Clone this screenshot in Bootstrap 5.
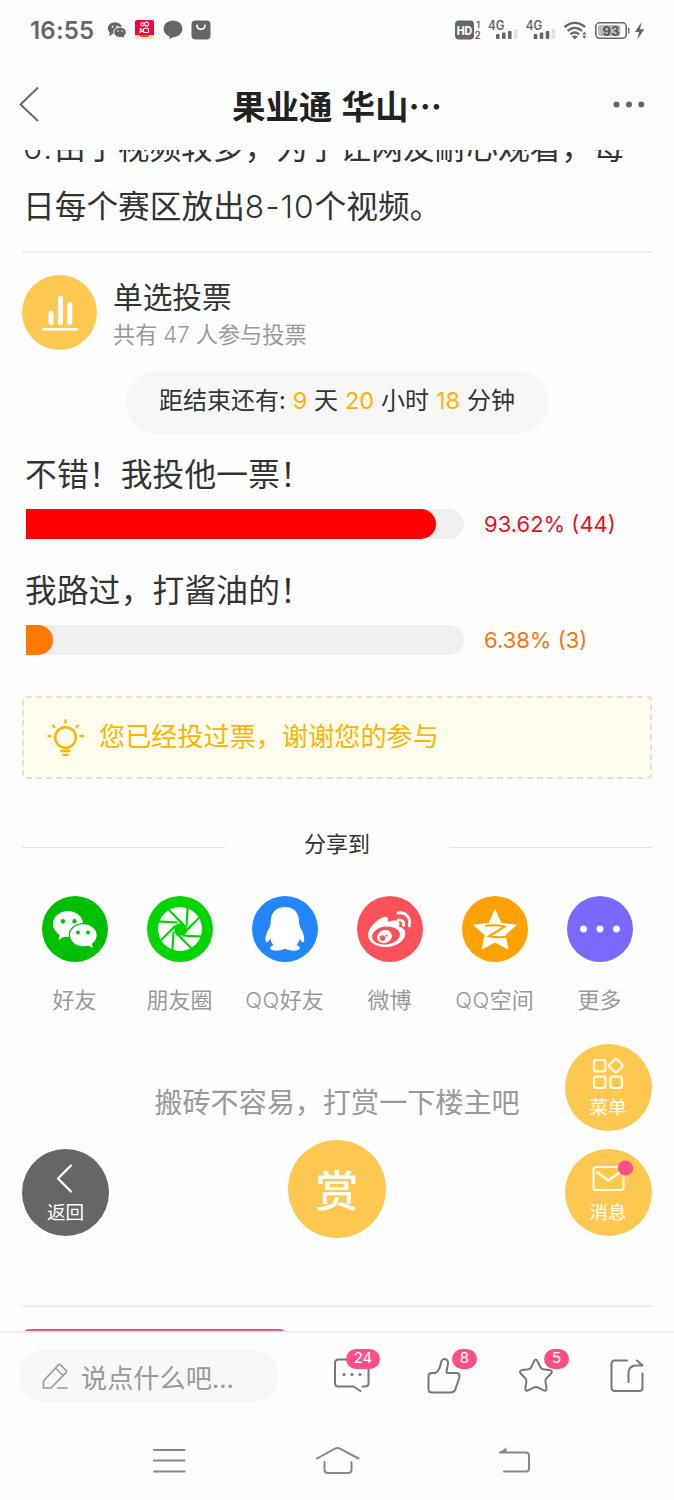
<!DOCTYPE html>
<html lang="zh-CN">
<head>
<meta charset="utf-8">
<meta name="viewport" content="width=device-width, initial-scale=1">
<title>果业通</title>
<link href="https://cdn.jsdelivr.net/npm/bootstrap@5.3.0/dist/css/bootstrap.min.css" rel="stylesheet">
<style>
body{font-family:"Noto Sans CJK SC",sans-serif;background:#fefefe;color:#333;height:1500px;overflow:hidden}
svg{display:block;flex:none;overflow:visible}
.status{height:60px;padding:0 27px 0 30px;color:#666}
.clock{font:600 24px/61px Inter,sans-serif;letter-spacing:.2px;width:64px;margin-right:13px;white-space:nowrap}
.topbar{height:90px}
.topbar h1{font-size:33.5px;font-weight:700;line-height:90px;color:#222;word-spacing:1.500px}
.topbar .side{width:60px}
main{height:1181px;overflow:hidden;padding:0 22px}
.rule{height:2px;background:#efefef}
.body-text{font-size:31.7px;line-height:59px;margin:-34px 0 17px;padding-left:1px;white-space:nowrap}
.lat{font-family:Inter,sans-serif;font-weight:300;line-height:0!important}
.poll-head{height:75px;margin-top:22px;gap:16px}
.poll-head .t1{font-size:29.7px;line-height:42px}
.poll-head .t2{font-size:22.2px;line-height:32px;color:#999;word-spacing:1px}
.disc{border-radius:50%;display:flex;align-items:center;justify-content:center;flex:none}
.yellow{background:#ffc951;color:#fff}
.remain{width:423px;height:63px;margin:21px auto 0;background:#f7f7f7;font-size:24px;line-height:56px;text-align:center;white-space:nowrap;word-spacing:1.500px}
.remain b{font-family:Inter,sans-serif;line-height:0;font-weight:400;font-size:23.5px;color:#fcb400}
.choice{font-size:31.7px;letter-spacing:.2px;line-height:45px;padding:0 0 1px 3px;white-space:nowrap}
.track{width:438.5px;height:30px;border-radius:0 15px 15px 0;background:#efefef;margin-left:3.5px}
.track div{height:30px;border-radius:0 15px 15px 0}
.pct{font-family:Inter,sans-serif;font-size:22px;line-height:30px;margin-left:20px}
.notice{height:83px;margin-top:41px;border:2px dashed #e6e3cd;border-radius:4px;background:#fffeee;color:#fcb400;font-size:26.15px;line-height:75px;padding-left:23px}
.share-title{margin-top:51px;height:30px;font-size:22px;line-height:30px}
.share-title span{margin-top:-6px}
.share-title i{width:203px;height:1px;background:#e4e4e4;margin-top:5px}
.share{margin-top:36px}
.share .disc{width:66px;height:66px}
.share .name{font-size:22px;line-height:32px;margin-top:20px;color:#999;white-space:nowrap}
.tip{font-size:28.1px;line-height:42px;margin-top:66px;color:#999;text-align:center}
.reward{width:98px;height:98px;margin:18px auto 0;font-size:43px;line-height:94px;font-weight:500;padding-bottom:3px}
.floater{position:absolute;width:87px;height:87px;flex-direction:column;justify-content:flex-start;font-size:18.6px;line-height:24px;color:#fff}
footer{height:169px;border-top:2px solid #eee}
.say{width:260px;height:52px;background:#f7f7f7;color:#999;font-size:26.2px;line-height:55px;margin-left:19px;padding-left:23px}
.tool{position:relative;width:36px;height:36px}
.count{position:absolute;top:-10px;height:20px;border-radius:10px;background:#ff4f86;color:#fff;font:400 15px/18px Inter,sans-serif;text-align:center}
.stroke{fill:none;stroke:#777;stroke-width:2;stroke-linecap:round;stroke-linejoin:round}
</style>
</head>
<body class="position-relative">
<div class="status d-flex align-items-center">
  <span class="clock">16:55</span>
  <svg width="104" height="22" viewBox="107 19 104 22">
    <g fill="#666"><ellipse cx="115" cy="28.3" rx="7.2" ry="6"/><path d="M110 32l-1 4 4-2z"/><ellipse cx="120" cy="32.3" rx="6.3" ry="5.2" stroke="#fefefe"/><path d="M121 36l3 2-.3-3z"/></g>
    <g fill="#fefefe"><circle cx="112.6" cy="26.7" r=".9"/><circle cx="117.3" cy="26.7" r=".9"/><circle cx="118" cy="31" r=".8"/><circle cx="122" cy="31" r=".8"/></g>
    <rect x="135" y="20" width="19" height="19" rx="2" fill="#f9dcae"/><path d="M137 20h15q2 0 2 2v13h-19V22q0-2 2-2z" fill="#f3043c"/>
    <g fill="none" stroke="#fff" stroke-width="1.100"><circle cx="142.400" cy="24.400" r="1.600"/><circle cx="146.600" cy="24.100" r="2"/><rect x="143.500" y="28.300" width="5" height="4.200" rx="1"/><path d="M140.300 28.500v3.800l2-1.200v-1.400z"/></g><path d="M139.500 35h10l-1.500 2h-7z" fill="#cf6840"/>
    <path d="M173 20.500c5.300 0 9.300 3.600 9.300 8.200s-3.500 7.800-8.300 8.200l-4.800 2.200.4-2.600c-3.500-1.200-5.900-4.200-5.900-7.800 0-4.600 4-8.200 9.300-8.200z" fill="#666"/>
    <rect x="191.500" y="20.500" width="19" height="19" rx="4" fill="#666"/><path d="M197 25.500c.6 5 7.400 5 8 0" fill="none" stroke="#fff" stroke-width="1.800" stroke-linecap="round"/>
  </svg>
  <svg class="ms-auto" width="192" height="24" viewBox="455 18 192 24" font-family="Inter,sans-serif" font-weight="600" fill="#666">
    <rect x="455" y="20.500" width="19" height="19" rx="4"/><text x="456.700" y="34.500" font-size="11.500" font-weight="800" fill="#fff" textLength="15.500" lengthAdjust="spacingAndGlyphs">HD</text>
    <text x="476" y="28" font-size="9.500">1</text><text x="474.500" y="39.300" font-size="10">2</text>
    <g id="sig"><text x="488" y="30" font-size="12.500" textLength="16.500" lengthAdjust="spacingAndGlyphs">4G</text><rect x="496" y="34" width="3.600" height="5" rx="1"/><rect x="502" y="32.500" width="3.600" height="6.500" rx="1"/><rect x="508" y="31" width="3.600" height="8" rx="1"/><rect x="514" y="29" width="3.600" height="10" rx="1" fill="#e2e2e2"/></g>
    <use href="#sig" x="37.700"/>
    <g fill="none" stroke="#666" stroke-width="2.300"><path d="M564.500 27q10.300-8.200 20.600 0"/><path d="M567.500 30.800q7.300-5.800 14.600 0"/><path d="M570.500 34.300q4.300-3.500 8.600 0"/></g><path d="M571.800 36.500q3-2 6 0l-3 3z"/><path d="M582.300 34.500l2-3 2 3zM582.300 35.700h4l-2 3z"/>
    <rect x="595.800" y="22.800" width="30.500" height="15.500" rx="4" fill="none" stroke="#666" stroke-width="1.600"/><rect x="598" y="25" width="22.500" height="11" rx="2" fill="#bbb"/><rect x="628" y="28" width="1.400" height="5.500"/><text x="602.500" y="35.500" font-size="12.500" font-weight="700" textLength="17" lengthAdjust="spacingAndGlyphs" fill="#555">93</text>
    <path d="M641.500 22l-6.500 10h4l-1.600 7.500 6.800-10.300h-4.200z"/>
  </svg>
</div>
<header class="topbar d-flex justify-content-between align-items-center">
  <div class="side"><svg width="60" height="40" viewBox="0 85 60 40"><path d="M38 87.500L20.500 104.500 38 121" fill="none" stroke="#666" stroke-width="1.900"/></svg></div>
  <h1 class="m-0">果业通 华山…</h1>
  <div class="side"><svg width="60" height="40" viewBox="614 85 60 40" fill="#666"><circle cx="616.500" cy="104.500" r="3"/><circle cx="629" cy="104.500" r="3"/><circle cx="641.300" cy="104.500" r="3"/></svg></div>
</header>
<main>
  <p class="body-text"><span class="lat" style="letter-spacing:2.200px">6.</span>由于视频较多，为了让网友耐心观看，每<br>日每个赛区放出<span class="lat" style="letter-spacing:1px">8-10</span>个视频。</p>
  <div class="rule"></div>
  <div class="poll-head d-flex">
    <div class="disc yellow" style="width:75px;height:75px"><svg width="36" height="36" viewBox="42 294 36 36" fill="#fff"><rect x="48.500" y="310" width="5" height="14" rx="2.300"/><rect x="58" y="295" width="5" height="29" rx="2.300"/><rect x="67.300" y="301" width="5" height="23" rx="2.300"/><rect x="42" y="327" width="36" height="2.500" rx="1"/></svg></div>
    <div><div class="t1">单选投票</div><div class="t2">共有 <span class="lat">47</span> 人参与投票</div></div>
  </div>
  <div class="remain rounded-pill">距结束还有: <b>9</b> 天 <b>20</b> 小时 <b>18</b> 分钟</div>
  <div class="choice" style="margin-top:16px">不错！我投他一票！</div>
  <div class="d-flex" style="margin-top:13px"><div class="track"><div style="width:93.62%;background:#ff0005"></div></div><span class="pct" style="color:#e3131c">93.62% (44)</span></div>
  <div class="choice" style="margin-top:27px">我路过，打酱油的！</div>
  <div class="d-flex" style="margin-top:13px"><div class="track"><div style="width:6.38%;background:#ff7800"></div></div><span class="pct" style="color:#f0770f">6.38% (3)</span></div>
  <div class="notice d-flex"><svg width="38" height="38" viewBox="47 718 38 38" style="margin:20px 14px 0 0" fill="none" stroke="#fcb400" stroke-width="2.400" stroke-linecap="round"><circle cx="65.500" cy="737.500" r="10.300"/><path d="M65.500 720.500v2M53 725.500l1.500 1.500M78 725.500l-1.500 1.500M48.500 736h2M80.500 736h2.500M61.500 751h8M63.500 755h4"/></svg>您已经投过票，谢谢您的参与</div>
  <div class="share-title d-flex justify-content-between align-items-center"><i></i><span>分享到</span><i></i></div>
  <div class="share row g-0 row-cols-6">
    <div class="col d-flex flex-column align-items-center"><div class="disc" style="background:#00be00"><svg width="66" height="66" viewBox="0 0 66 66"><g fill="#fff"><ellipse cx="26" cy="28" rx="15" ry="13"/><path d="M18 37l-1.500 7 7-4z"/><ellipse cx="41.300" cy="39.300" rx="14" ry="11.700" stroke="#00be00" stroke-width="1.300"/><path d="M45 49l6 3-1.500-5.500z"/></g><g fill="#00be00"><circle cx="21" cy="25.300" r="2.200"/><circle cx="32.500" cy="25.300" r="2.200"/><circle cx="36" cy="36.500" r="1.900"/><circle cx="46" cy="36.500" r="1.900"/></g></svg></div><span class="name">好友</span></div>
    <div class="col d-flex flex-column align-items-center"><div class="disc" style="background:#00d500"><svg width="66" height="66" viewBox="0 0 66 66"><circle cx="33" cy="33" r="22" fill="#fff"/><path d="M30.500 27.500h6l3 3v6l-3 3h-6l-3-3v-6z" fill="#00d500"/><g fill="#00d500"><g id="bl"><path d="M21 14.500l1.500-1.200L37 27.500l-1.500 2z"/><path d="M39.600 11h2.200l-1.300 20-2-1z"/></g><use href="#bl" transform="rotate(90 33 33)"/><use href="#bl" transform="rotate(180 33 33)"/><use href="#bl" transform="rotate(270 33 33)"/></g></svg></div><span class="name">朋友圈</span></div>
    <div class="col d-flex flex-column align-items-center"><div class="disc" style="background:#2186ff"><svg width="66" height="66" viewBox="0 0 66 66"><path d="M33 11C24 11 18.800 17 18.800 25c0 3-.5 5-2 8-2.500 4-4.300 10-2.800 13 1 1 3-1 4.500-3 .5 3 1.500 4.500 3 6-2.500 1-4 2.500-3 4 2 2.500 11 2 14.500-.5 3.500 2.500 12.500 3 14.500.5 1-1.500-.5-3-3-4 1.500-1.500 2.500-3 3-6 1.500 2 3.500 4 4.200 3 1.500-3-.2-9-2.700-13-1.500-3-2-5-2-8C47 17 42 11 33 11z" fill="#fff"/></svg></div><span class="name"><span class="lat" style="letter-spacing:.6px">QQ</span>好友</span></div>
    <div class="col d-flex flex-column align-items-center"><div class="disc" style="background:#fb5159"><svg width="66" height="66" viewBox="0 0 66 66"><path d="M27 21c3-1 5 1 3.500 5 5-2 10-2 11.500 0 1 1.500.5 3-.2 4.500 4 1 6.500 3 6.500 7C48.300 45 39 51 29 51c-9.500 0-18-4.500-18-12C11 32 20 23 27 21z" fill="#fff"/><ellipse cx="29" cy="39.500" rx="14" ry="9" transform="rotate(-7 29 39.500)" fill="#fb5159"/><ellipse cx="27.500" cy="40.500" rx="7.500" ry="6.500" fill="#fff" transform="rotate(-20 27.500 40.500)"/><circle cx="25.500" cy="42" r="2.700" fill="#fb5159"/><circle cx="29.500" cy="39.500" r="1.100" fill="#fb5159"/><path d="M41 17c8-1.500 13.500 5.500 11.200 13M41 24c4-.8 6.500 2 5.500 5.500" fill="none" stroke="#fff" stroke-width="2.800" stroke-linecap="round"/></svg></div><span class="name">微博</span></div>
    <div class="col d-flex flex-column align-items-center"><div class="disc" style="background:#ffa200"><svg width="66" height="66" viewBox="0 0 66 66"><path d="M33 13l6.500 14 15.500 1.700-11.500 10.300 3.200 14.800L33 46.500 19.500 53.800 22.500 39 11 28.700 26.500 27z" fill="#fff"/><path d="M23 29.800q12-1.500 19.500.7L27 40.300q9 1.500 20 .5" fill="none" stroke="#ffa200" stroke-width="2"/></svg></div><span class="name"><span class="lat" style="letter-spacing:.6px">QQ</span>空间</span></div>
    <div class="col d-flex flex-column align-items-center"><div class="disc" style="background:#7d68ff"><svg width="66" height="66" viewBox="0 0 66 66" fill="#fff"><circle cx="16.500" cy="33" r="3.400"/><circle cx="33" cy="33" r="3.400"/><circle cx="49.500" cy="33" r="3.400"/></svg></div><span class="name">更多</span></div>
  </div>
  <div class="tip">搬砖不容易，打赏一下楼主吧</div>
  <div class="disc yellow reward">赏</div>
  <div class="rule" style="margin-top:67px"></div>
  <div style="width:263px;height:12px;margin:22px 0 0 1px;background:#e2578a;border-radius:6px"></div>
</main>
<footer>
  <div class="d-flex" style="padding-top:17px">
    <div class="say rounded-pill d-flex"><svg width="26" height="28" viewBox="43 1362 26 28" style="margin:12px 13px 0 0" fill="none" stroke="#999" stroke-width="1.700" stroke-linejoin="round" stroke-linecap="round"><path d="M44.500 1388v-7l14.800-16q1.200-1.200 2.400 0l5.300 5.300q1.200 1.200 0 2.400L52 1388zM56.500 1368l7.500 7.500M58.500 1388h9.500"/></svg>说点什么吧...</div>
    <div class="d-flex justify-content-between" style="margin:9px 28px 0 55px;width:312px">
      <div class="tool"><svg class="stroke" width="36" height="36" viewBox="334 1358 36 36"><path d="M362.500 1385.500h2.500q3.500 0 3.500-3.500v-20q0-3.500-3.500-3.500h-26.500q-3.500 0-3.500 3.500v20q0 3.500 3.500 3.500h15l7 4.500"/><g fill="#777" stroke="none"><circle cx="344" cy="1373.500" r="1.600"/><circle cx="352" cy="1373.500" r="1.600"/><circle cx="360" cy="1373.500" r="1.600"/></g></svg><span class="count" style="left:12px;width:34px">24</span></div>
      <div class="tool"><svg class="stroke" width="36" height="36" viewBox="426 1358 36 36"><path d="M431 1372h4q4-1.500 5.500-8l1-4q1-2.500 3.500-2 3.500 1 3 5l-1.500 7.500q0 1.500 1.500 1.500h8q4 0 3.500 4l-4 12q-1 3.500-5 3.500h-18.500q-3.500 0-3.500-3.500v-13q0-2.500 2.500-3z"/></svg><span class="count" style="left:26px;width:25px">8</span></div>
      <div class="tool"><svg class="stroke" width="36" height="36" viewBox="518 1358 36 36"><path d="M533.500 1361q2-4.500 4 0l2.500 5q1 2 3 2.500l6 .8q4.500.7 1.500 4l-4 4q-1.500 1.500-1.300 3.500l1 6q.6 4.500-3.200 2.700l-5-2.500q-2.300-1.200-4.600 0l-5 2.500q-3.800 1.800-3.200-2.700l1-6q.2-2-1.300-3.500l-4-4q-3-3.300 1.500-4l6-.8q2-.5 3-2.500z" transform="translate(.2 -.3)"/></svg><span class="count" style="left:26px;width:25px">5</span></div>
      <div class="tool"><svg class="stroke" width="36" height="36" viewBox="610 1358 36 36"><path d="M627 1359.500h-12q-3.500 0-3.500 3.500v23.500q0 3.500 3.500 3.500h24q3.500 0 3.500-3.500v-14M628.500 1381v-9q0-7.500 8-7.500h5.500M637 1359.500l5.500 5-5 0"/></svg></div>
    </div>
  </div>
  <svg width="674" height="60" viewBox="0 1431 674 60" style="margin-top:29px" fill="none" stroke="#888" stroke-width="2" stroke-linecap="round" stroke-linejoin="round"><path d="M154 1450h30.500M154 1460.500h30.500M154 1471.500h30.500M317 1458.500l17.500-9.700q3-1.500 6 0l18 9.700M324.500 1462v7.500q0 3.500 3.500 3.500h20q3.500 0 3.500-3.500V1462M504 1471.500h22q3 0 3-3v-13q0-3-3-3h-26"/><path d="M499 1452.500l7.500-5v5z" fill="#888" stroke="none"/></svg>
</footer>
<a class="floater disc yellow text-decoration-none" style="right:22.500px;top:1044px"><svg width="87" height="50" viewBox="565 1044 87 50" fill="none" stroke="#fff9e8" stroke-width="2.200"><rect x="594" y="1060" width="11.500" height="11.500" rx="2.500"/><rect x="594" y="1076.500" width="11.500" height="11.500" rx="2.500"/><rect x="610.500" y="1076.500" width="11.500" height="11.500" rx="2.500"/><rect x="610.500" y="1060.300" width="10.600" height="10.600" rx="2.200" transform="rotate(45 615.800 1065.600)"/></svg>菜单</a>
<a class="floater disc yellow text-decoration-none" style="right:22.500px;top:1149px"><svg width="87" height="50" viewBox="565 1149 87 50" fill="none" stroke="#fff9e8" stroke-width="2.200" stroke-linecap="round" stroke-linejoin="round"><rect x="593.500" y="1167" width="30" height="23" rx="2.500"/><path d="M597.500 1172.500l11 8 11-8"/><circle cx="625.500" cy="1168" r="7.600" fill="#ff4f86" stroke="none"/></svg>消息</a>
<a class="floater disc text-decoration-none" style="left:22px;top:1149px;background:#666"><svg width="87" height="50" viewBox="22 1149 87 50" fill="none" stroke="#fff" stroke-width="2.300" stroke-linecap="round" stroke-linejoin="round"><path d="M71 1165.500l-13 13 13 13"/></svg>返回</a>
<script src="https://cdn.jsdelivr.net/npm/bootstrap@5.3.0/dist/js/bootstrap.bundle.min.js"></script>
</body>
</html>
